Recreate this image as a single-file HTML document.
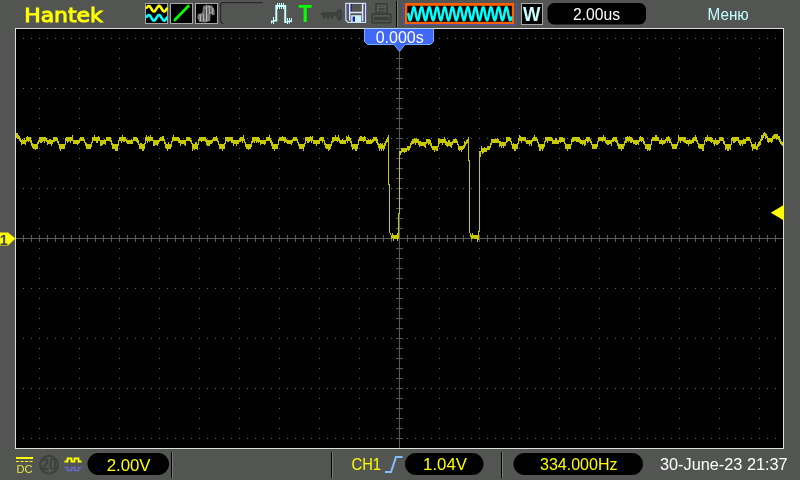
<!DOCTYPE html>
<html lang="ru"><head><meta charset="utf-8"><title>Hantek</title>
<style>html,body{margin:0;padding:0;background:#525552;overflow:hidden}body{width:800px;height:480px;position:relative;font-family:"Liberation Sans",sans-serif}svg{display:block;position:absolute;left:0;top:0;will-change:transform}text{font-family:"Liberation Sans",sans-serif}</style>
</head><body>
<svg width="800" height="480" viewBox="0 0 800 480">
<rect x="0" y="0" width="800" height="480" fill="#525552"/>
<rect x="15" y="28" width="769" height="421" fill="#dedede"/>
<rect x="16" y="29" width="767" height="419" fill="#000"/>
<path shape-rendering="crispEdges" fill="#686868" d="M23 38h1v1h-1zM31 38h1v1h-1zM39 38h1v1h-1zM47 38h1v1h-1zM55 38h1v1h-1zM63 38h1v1h-1zM71 38h1v1h-1zM79 38h1v1h-1zM87 38h1v1h-1zM95 38h1v1h-1zM103 38h1v1h-1zM111 38h1v1h-1zM119 38h1v1h-1zM127 38h1v1h-1zM135 38h1v1h-1zM143 38h1v1h-1zM151 38h1v1h-1zM159 38h1v1h-1zM167 38h1v1h-1zM175 38h1v1h-1zM183 38h1v1h-1zM191 38h1v1h-1zM199 38h1v1h-1zM207 38h1v1h-1zM215 38h1v1h-1zM223 38h1v1h-1zM231 38h1v1h-1zM239 38h1v1h-1zM247 38h1v1h-1zM255 38h1v1h-1zM263 38h1v1h-1zM271 38h1v1h-1zM279 38h1v1h-1zM287 38h1v1h-1zM295 38h1v1h-1zM303 38h1v1h-1zM311 38h1v1h-1zM319 38h1v1h-1zM327 38h1v1h-1zM335 38h1v1h-1zM343 38h1v1h-1zM351 38h1v1h-1zM359 38h1v1h-1zM367 38h1v1h-1zM375 38h1v1h-1zM383 38h1v1h-1zM391 38h1v1h-1zM399 38h1v1h-1zM407 38h1v1h-1zM415 38h1v1h-1zM423 38h1v1h-1zM431 38h1v1h-1zM439 38h1v1h-1zM447 38h1v1h-1zM455 38h1v1h-1zM463 38h1v1h-1zM471 38h1v1h-1zM479 38h1v1h-1zM487 38h1v1h-1zM495 38h1v1h-1zM503 38h1v1h-1zM511 38h1v1h-1zM519 38h1v1h-1zM527 38h1v1h-1zM535 38h1v1h-1zM543 38h1v1h-1zM551 38h1v1h-1zM559 38h1v1h-1zM567 38h1v1h-1zM575 38h1v1h-1zM583 38h1v1h-1zM591 38h1v1h-1zM599 38h1v1h-1zM607 38h1v1h-1zM615 38h1v1h-1zM623 38h1v1h-1zM631 38h1v1h-1zM639 38h1v1h-1zM647 38h1v1h-1zM655 38h1v1h-1zM663 38h1v1h-1zM671 38h1v1h-1zM679 38h1v1h-1zM687 38h1v1h-1zM695 38h1v1h-1zM703 38h1v1h-1zM711 38h1v1h-1zM719 38h1v1h-1zM727 38h1v1h-1zM735 38h1v1h-1zM743 38h1v1h-1zM751 38h1v1h-1zM759 38h1v1h-1zM767 38h1v1h-1zM775 38h1v1h-1zM23 88h1v1h-1zM31 88h1v1h-1zM39 88h1v1h-1zM47 88h1v1h-1zM55 88h1v1h-1zM63 88h1v1h-1zM71 88h1v1h-1zM79 88h1v1h-1zM87 88h1v1h-1zM95 88h1v1h-1zM103 88h1v1h-1zM111 88h1v1h-1zM119 88h1v1h-1zM127 88h1v1h-1zM135 88h1v1h-1zM143 88h1v1h-1zM151 88h1v1h-1zM159 88h1v1h-1zM167 88h1v1h-1zM175 88h1v1h-1zM183 88h1v1h-1zM191 88h1v1h-1zM199 88h1v1h-1zM207 88h1v1h-1zM215 88h1v1h-1zM223 88h1v1h-1zM231 88h1v1h-1zM239 88h1v1h-1zM247 88h1v1h-1zM255 88h1v1h-1zM263 88h1v1h-1zM271 88h1v1h-1zM279 88h1v1h-1zM287 88h1v1h-1zM295 88h1v1h-1zM303 88h1v1h-1zM311 88h1v1h-1zM319 88h1v1h-1zM327 88h1v1h-1zM335 88h1v1h-1zM343 88h1v1h-1zM351 88h1v1h-1zM359 88h1v1h-1zM367 88h1v1h-1zM375 88h1v1h-1zM383 88h1v1h-1zM391 88h1v1h-1zM399 88h1v1h-1zM407 88h1v1h-1zM415 88h1v1h-1zM423 88h1v1h-1zM431 88h1v1h-1zM439 88h1v1h-1zM447 88h1v1h-1zM455 88h1v1h-1zM463 88h1v1h-1zM471 88h1v1h-1zM479 88h1v1h-1zM487 88h1v1h-1zM495 88h1v1h-1zM503 88h1v1h-1zM511 88h1v1h-1zM519 88h1v1h-1zM527 88h1v1h-1zM535 88h1v1h-1zM543 88h1v1h-1zM551 88h1v1h-1zM559 88h1v1h-1zM567 88h1v1h-1zM575 88h1v1h-1zM583 88h1v1h-1zM591 88h1v1h-1zM599 88h1v1h-1zM607 88h1v1h-1zM615 88h1v1h-1zM623 88h1v1h-1zM631 88h1v1h-1zM639 88h1v1h-1zM647 88h1v1h-1zM655 88h1v1h-1zM663 88h1v1h-1zM671 88h1v1h-1zM679 88h1v1h-1zM687 88h1v1h-1zM695 88h1v1h-1zM703 88h1v1h-1zM711 88h1v1h-1zM719 88h1v1h-1zM727 88h1v1h-1zM735 88h1v1h-1zM743 88h1v1h-1zM751 88h1v1h-1zM759 88h1v1h-1zM767 88h1v1h-1zM775 88h1v1h-1zM23 138h1v1h-1zM31 138h1v1h-1zM39 138h1v1h-1zM47 138h1v1h-1zM55 138h1v1h-1zM63 138h1v1h-1zM71 138h1v1h-1zM79 138h1v1h-1zM87 138h1v1h-1zM95 138h1v1h-1zM103 138h1v1h-1zM111 138h1v1h-1zM119 138h1v1h-1zM127 138h1v1h-1zM135 138h1v1h-1zM143 138h1v1h-1zM151 138h1v1h-1zM159 138h1v1h-1zM167 138h1v1h-1zM175 138h1v1h-1zM183 138h1v1h-1zM191 138h1v1h-1zM199 138h1v1h-1zM207 138h1v1h-1zM215 138h1v1h-1zM223 138h1v1h-1zM231 138h1v1h-1zM239 138h1v1h-1zM247 138h1v1h-1zM255 138h1v1h-1zM263 138h1v1h-1zM271 138h1v1h-1zM279 138h1v1h-1zM287 138h1v1h-1zM295 138h1v1h-1zM303 138h1v1h-1zM311 138h1v1h-1zM319 138h1v1h-1zM327 138h1v1h-1zM335 138h1v1h-1zM343 138h1v1h-1zM351 138h1v1h-1zM359 138h1v1h-1zM367 138h1v1h-1zM375 138h1v1h-1zM383 138h1v1h-1zM391 138h1v1h-1zM399 138h1v1h-1zM407 138h1v1h-1zM415 138h1v1h-1zM423 138h1v1h-1zM431 138h1v1h-1zM439 138h1v1h-1zM447 138h1v1h-1zM455 138h1v1h-1zM463 138h1v1h-1zM471 138h1v1h-1zM479 138h1v1h-1zM487 138h1v1h-1zM495 138h1v1h-1zM503 138h1v1h-1zM511 138h1v1h-1zM519 138h1v1h-1zM527 138h1v1h-1zM535 138h1v1h-1zM543 138h1v1h-1zM551 138h1v1h-1zM559 138h1v1h-1zM567 138h1v1h-1zM575 138h1v1h-1zM583 138h1v1h-1zM591 138h1v1h-1zM599 138h1v1h-1zM607 138h1v1h-1zM615 138h1v1h-1zM623 138h1v1h-1zM631 138h1v1h-1zM639 138h1v1h-1zM647 138h1v1h-1zM655 138h1v1h-1zM663 138h1v1h-1zM671 138h1v1h-1zM679 138h1v1h-1zM687 138h1v1h-1zM695 138h1v1h-1zM703 138h1v1h-1zM711 138h1v1h-1zM719 138h1v1h-1zM727 138h1v1h-1zM735 138h1v1h-1zM743 138h1v1h-1zM751 138h1v1h-1zM759 138h1v1h-1zM767 138h1v1h-1zM775 138h1v1h-1zM23 188h1v1h-1zM31 188h1v1h-1zM39 188h1v1h-1zM47 188h1v1h-1zM55 188h1v1h-1zM63 188h1v1h-1zM71 188h1v1h-1zM79 188h1v1h-1zM87 188h1v1h-1zM95 188h1v1h-1zM103 188h1v1h-1zM111 188h1v1h-1zM119 188h1v1h-1zM127 188h1v1h-1zM135 188h1v1h-1zM143 188h1v1h-1zM151 188h1v1h-1zM159 188h1v1h-1zM167 188h1v1h-1zM175 188h1v1h-1zM183 188h1v1h-1zM191 188h1v1h-1zM199 188h1v1h-1zM207 188h1v1h-1zM215 188h1v1h-1zM223 188h1v1h-1zM231 188h1v1h-1zM239 188h1v1h-1zM247 188h1v1h-1zM255 188h1v1h-1zM263 188h1v1h-1zM271 188h1v1h-1zM279 188h1v1h-1zM287 188h1v1h-1zM295 188h1v1h-1zM303 188h1v1h-1zM311 188h1v1h-1zM319 188h1v1h-1zM327 188h1v1h-1zM335 188h1v1h-1zM343 188h1v1h-1zM351 188h1v1h-1zM359 188h1v1h-1zM367 188h1v1h-1zM375 188h1v1h-1zM383 188h1v1h-1zM391 188h1v1h-1zM399 188h1v1h-1zM407 188h1v1h-1zM415 188h1v1h-1zM423 188h1v1h-1zM431 188h1v1h-1zM439 188h1v1h-1zM447 188h1v1h-1zM455 188h1v1h-1zM463 188h1v1h-1zM471 188h1v1h-1zM479 188h1v1h-1zM487 188h1v1h-1zM495 188h1v1h-1zM503 188h1v1h-1zM511 188h1v1h-1zM519 188h1v1h-1zM527 188h1v1h-1zM535 188h1v1h-1zM543 188h1v1h-1zM551 188h1v1h-1zM559 188h1v1h-1zM567 188h1v1h-1zM575 188h1v1h-1zM583 188h1v1h-1zM591 188h1v1h-1zM599 188h1v1h-1zM607 188h1v1h-1zM615 188h1v1h-1zM623 188h1v1h-1zM631 188h1v1h-1zM639 188h1v1h-1zM647 188h1v1h-1zM655 188h1v1h-1zM663 188h1v1h-1zM671 188h1v1h-1zM679 188h1v1h-1zM687 188h1v1h-1zM695 188h1v1h-1zM703 188h1v1h-1zM711 188h1v1h-1zM719 188h1v1h-1zM727 188h1v1h-1zM735 188h1v1h-1zM743 188h1v1h-1zM751 188h1v1h-1zM759 188h1v1h-1zM767 188h1v1h-1zM775 188h1v1h-1zM23 288h1v1h-1zM31 288h1v1h-1zM39 288h1v1h-1zM47 288h1v1h-1zM55 288h1v1h-1zM63 288h1v1h-1zM71 288h1v1h-1zM79 288h1v1h-1zM87 288h1v1h-1zM95 288h1v1h-1zM103 288h1v1h-1zM111 288h1v1h-1zM119 288h1v1h-1zM127 288h1v1h-1zM135 288h1v1h-1zM143 288h1v1h-1zM151 288h1v1h-1zM159 288h1v1h-1zM167 288h1v1h-1zM175 288h1v1h-1zM183 288h1v1h-1zM191 288h1v1h-1zM199 288h1v1h-1zM207 288h1v1h-1zM215 288h1v1h-1zM223 288h1v1h-1zM231 288h1v1h-1zM239 288h1v1h-1zM247 288h1v1h-1zM255 288h1v1h-1zM263 288h1v1h-1zM271 288h1v1h-1zM279 288h1v1h-1zM287 288h1v1h-1zM295 288h1v1h-1zM303 288h1v1h-1zM311 288h1v1h-1zM319 288h1v1h-1zM327 288h1v1h-1zM335 288h1v1h-1zM343 288h1v1h-1zM351 288h1v1h-1zM359 288h1v1h-1zM367 288h1v1h-1zM375 288h1v1h-1zM383 288h1v1h-1zM391 288h1v1h-1zM399 288h1v1h-1zM407 288h1v1h-1zM415 288h1v1h-1zM423 288h1v1h-1zM431 288h1v1h-1zM439 288h1v1h-1zM447 288h1v1h-1zM455 288h1v1h-1zM463 288h1v1h-1zM471 288h1v1h-1zM479 288h1v1h-1zM487 288h1v1h-1zM495 288h1v1h-1zM503 288h1v1h-1zM511 288h1v1h-1zM519 288h1v1h-1zM527 288h1v1h-1zM535 288h1v1h-1zM543 288h1v1h-1zM551 288h1v1h-1zM559 288h1v1h-1zM567 288h1v1h-1zM575 288h1v1h-1zM583 288h1v1h-1zM591 288h1v1h-1zM599 288h1v1h-1zM607 288h1v1h-1zM615 288h1v1h-1zM623 288h1v1h-1zM631 288h1v1h-1zM639 288h1v1h-1zM647 288h1v1h-1zM655 288h1v1h-1zM663 288h1v1h-1zM671 288h1v1h-1zM679 288h1v1h-1zM687 288h1v1h-1zM695 288h1v1h-1zM703 288h1v1h-1zM711 288h1v1h-1zM719 288h1v1h-1zM727 288h1v1h-1zM735 288h1v1h-1zM743 288h1v1h-1zM751 288h1v1h-1zM759 288h1v1h-1zM767 288h1v1h-1zM775 288h1v1h-1zM23 338h1v1h-1zM31 338h1v1h-1zM39 338h1v1h-1zM47 338h1v1h-1zM55 338h1v1h-1zM63 338h1v1h-1zM71 338h1v1h-1zM79 338h1v1h-1zM87 338h1v1h-1zM95 338h1v1h-1zM103 338h1v1h-1zM111 338h1v1h-1zM119 338h1v1h-1zM127 338h1v1h-1zM135 338h1v1h-1zM143 338h1v1h-1zM151 338h1v1h-1zM159 338h1v1h-1zM167 338h1v1h-1zM175 338h1v1h-1zM183 338h1v1h-1zM191 338h1v1h-1zM199 338h1v1h-1zM207 338h1v1h-1zM215 338h1v1h-1zM223 338h1v1h-1zM231 338h1v1h-1zM239 338h1v1h-1zM247 338h1v1h-1zM255 338h1v1h-1zM263 338h1v1h-1zM271 338h1v1h-1zM279 338h1v1h-1zM287 338h1v1h-1zM295 338h1v1h-1zM303 338h1v1h-1zM311 338h1v1h-1zM319 338h1v1h-1zM327 338h1v1h-1zM335 338h1v1h-1zM343 338h1v1h-1zM351 338h1v1h-1zM359 338h1v1h-1zM367 338h1v1h-1zM375 338h1v1h-1zM383 338h1v1h-1zM391 338h1v1h-1zM399 338h1v1h-1zM407 338h1v1h-1zM415 338h1v1h-1zM423 338h1v1h-1zM431 338h1v1h-1zM439 338h1v1h-1zM447 338h1v1h-1zM455 338h1v1h-1zM463 338h1v1h-1zM471 338h1v1h-1zM479 338h1v1h-1zM487 338h1v1h-1zM495 338h1v1h-1zM503 338h1v1h-1zM511 338h1v1h-1zM519 338h1v1h-1zM527 338h1v1h-1zM535 338h1v1h-1zM543 338h1v1h-1zM551 338h1v1h-1zM559 338h1v1h-1zM567 338h1v1h-1zM575 338h1v1h-1zM583 338h1v1h-1zM591 338h1v1h-1zM599 338h1v1h-1zM607 338h1v1h-1zM615 338h1v1h-1zM623 338h1v1h-1zM631 338h1v1h-1zM639 338h1v1h-1zM647 338h1v1h-1zM655 338h1v1h-1zM663 338h1v1h-1zM671 338h1v1h-1zM679 338h1v1h-1zM687 338h1v1h-1zM695 338h1v1h-1zM703 338h1v1h-1zM711 338h1v1h-1zM719 338h1v1h-1zM727 338h1v1h-1zM735 338h1v1h-1zM743 338h1v1h-1zM751 338h1v1h-1zM759 338h1v1h-1zM767 338h1v1h-1zM775 338h1v1h-1zM23 388h1v1h-1zM31 388h1v1h-1zM39 388h1v1h-1zM47 388h1v1h-1zM55 388h1v1h-1zM63 388h1v1h-1zM71 388h1v1h-1zM79 388h1v1h-1zM87 388h1v1h-1zM95 388h1v1h-1zM103 388h1v1h-1zM111 388h1v1h-1zM119 388h1v1h-1zM127 388h1v1h-1zM135 388h1v1h-1zM143 388h1v1h-1zM151 388h1v1h-1zM159 388h1v1h-1zM167 388h1v1h-1zM175 388h1v1h-1zM183 388h1v1h-1zM191 388h1v1h-1zM199 388h1v1h-1zM207 388h1v1h-1zM215 388h1v1h-1zM223 388h1v1h-1zM231 388h1v1h-1zM239 388h1v1h-1zM247 388h1v1h-1zM255 388h1v1h-1zM263 388h1v1h-1zM271 388h1v1h-1zM279 388h1v1h-1zM287 388h1v1h-1zM295 388h1v1h-1zM303 388h1v1h-1zM311 388h1v1h-1zM319 388h1v1h-1zM327 388h1v1h-1zM335 388h1v1h-1zM343 388h1v1h-1zM351 388h1v1h-1zM359 388h1v1h-1zM367 388h1v1h-1zM375 388h1v1h-1zM383 388h1v1h-1zM391 388h1v1h-1zM399 388h1v1h-1zM407 388h1v1h-1zM415 388h1v1h-1zM423 388h1v1h-1zM431 388h1v1h-1zM439 388h1v1h-1zM447 388h1v1h-1zM455 388h1v1h-1zM463 388h1v1h-1zM471 388h1v1h-1zM479 388h1v1h-1zM487 388h1v1h-1zM495 388h1v1h-1zM503 388h1v1h-1zM511 388h1v1h-1zM519 388h1v1h-1zM527 388h1v1h-1zM535 388h1v1h-1zM543 388h1v1h-1zM551 388h1v1h-1zM559 388h1v1h-1zM567 388h1v1h-1zM575 388h1v1h-1zM583 388h1v1h-1zM591 388h1v1h-1zM599 388h1v1h-1zM607 388h1v1h-1zM615 388h1v1h-1zM623 388h1v1h-1zM631 388h1v1h-1zM639 388h1v1h-1zM647 388h1v1h-1zM655 388h1v1h-1zM663 388h1v1h-1zM671 388h1v1h-1zM679 388h1v1h-1zM687 388h1v1h-1zM695 388h1v1h-1zM703 388h1v1h-1zM711 388h1v1h-1zM719 388h1v1h-1zM727 388h1v1h-1zM735 388h1v1h-1zM743 388h1v1h-1zM751 388h1v1h-1zM759 388h1v1h-1zM767 388h1v1h-1zM775 388h1v1h-1zM23 438h1v1h-1zM31 438h1v1h-1zM39 438h1v1h-1zM47 438h1v1h-1zM55 438h1v1h-1zM63 438h1v1h-1zM71 438h1v1h-1zM79 438h1v1h-1zM87 438h1v1h-1zM95 438h1v1h-1zM103 438h1v1h-1zM111 438h1v1h-1zM119 438h1v1h-1zM127 438h1v1h-1zM135 438h1v1h-1zM143 438h1v1h-1zM151 438h1v1h-1zM159 438h1v1h-1zM167 438h1v1h-1zM175 438h1v1h-1zM183 438h1v1h-1zM191 438h1v1h-1zM199 438h1v1h-1zM207 438h1v1h-1zM215 438h1v1h-1zM223 438h1v1h-1zM231 438h1v1h-1zM239 438h1v1h-1zM247 438h1v1h-1zM255 438h1v1h-1zM263 438h1v1h-1zM271 438h1v1h-1zM279 438h1v1h-1zM287 438h1v1h-1zM295 438h1v1h-1zM303 438h1v1h-1zM311 438h1v1h-1zM319 438h1v1h-1zM327 438h1v1h-1zM335 438h1v1h-1zM343 438h1v1h-1zM351 438h1v1h-1zM359 438h1v1h-1zM367 438h1v1h-1zM375 438h1v1h-1zM383 438h1v1h-1zM391 438h1v1h-1zM399 438h1v1h-1zM407 438h1v1h-1zM415 438h1v1h-1zM423 438h1v1h-1zM431 438h1v1h-1zM439 438h1v1h-1zM447 438h1v1h-1zM455 438h1v1h-1zM463 438h1v1h-1zM471 438h1v1h-1zM479 438h1v1h-1zM487 438h1v1h-1zM495 438h1v1h-1zM503 438h1v1h-1zM511 438h1v1h-1zM519 438h1v1h-1zM527 438h1v1h-1zM535 438h1v1h-1zM543 438h1v1h-1zM551 438h1v1h-1zM559 438h1v1h-1zM567 438h1v1h-1zM575 438h1v1h-1zM583 438h1v1h-1zM591 438h1v1h-1zM599 438h1v1h-1zM607 438h1v1h-1zM615 438h1v1h-1zM623 438h1v1h-1zM631 438h1v1h-1zM639 438h1v1h-1zM647 438h1v1h-1zM655 438h1v1h-1zM663 438h1v1h-1zM671 438h1v1h-1zM679 438h1v1h-1zM687 438h1v1h-1zM695 438h1v1h-1zM703 438h1v1h-1zM711 438h1v1h-1zM719 438h1v1h-1zM727 438h1v1h-1zM735 438h1v1h-1zM743 438h1v1h-1zM751 438h1v1h-1zM759 438h1v1h-1zM767 438h1v1h-1zM775 438h1v1h-1zM39 48h1v1h-1zM39 58h1v1h-1zM39 68h1v1h-1zM39 78h1v1h-1zM39 98h1v1h-1zM39 108h1v1h-1zM39 118h1v1h-1zM39 128h1v1h-1zM39 148h1v1h-1zM39 158h1v1h-1zM39 168h1v1h-1zM39 178h1v1h-1zM39 198h1v1h-1zM39 208h1v1h-1zM39 218h1v1h-1zM39 228h1v1h-1zM39 248h1v1h-1zM39 258h1v1h-1zM39 268h1v1h-1zM39 278h1v1h-1zM39 298h1v1h-1zM39 308h1v1h-1zM39 318h1v1h-1zM39 328h1v1h-1zM39 348h1v1h-1zM39 358h1v1h-1zM39 368h1v1h-1zM39 378h1v1h-1zM39 398h1v1h-1zM39 408h1v1h-1zM39 418h1v1h-1zM39 428h1v1h-1zM79 48h1v1h-1zM79 58h1v1h-1zM79 68h1v1h-1zM79 78h1v1h-1zM79 98h1v1h-1zM79 108h1v1h-1zM79 118h1v1h-1zM79 128h1v1h-1zM79 148h1v1h-1zM79 158h1v1h-1zM79 168h1v1h-1zM79 178h1v1h-1zM79 198h1v1h-1zM79 208h1v1h-1zM79 218h1v1h-1zM79 228h1v1h-1zM79 248h1v1h-1zM79 258h1v1h-1zM79 268h1v1h-1zM79 278h1v1h-1zM79 298h1v1h-1zM79 308h1v1h-1zM79 318h1v1h-1zM79 328h1v1h-1zM79 348h1v1h-1zM79 358h1v1h-1zM79 368h1v1h-1zM79 378h1v1h-1zM79 398h1v1h-1zM79 408h1v1h-1zM79 418h1v1h-1zM79 428h1v1h-1zM119 48h1v1h-1zM119 58h1v1h-1zM119 68h1v1h-1zM119 78h1v1h-1zM119 98h1v1h-1zM119 108h1v1h-1zM119 118h1v1h-1zM119 128h1v1h-1zM119 148h1v1h-1zM119 158h1v1h-1zM119 168h1v1h-1zM119 178h1v1h-1zM119 198h1v1h-1zM119 208h1v1h-1zM119 218h1v1h-1zM119 228h1v1h-1zM119 248h1v1h-1zM119 258h1v1h-1zM119 268h1v1h-1zM119 278h1v1h-1zM119 298h1v1h-1zM119 308h1v1h-1zM119 318h1v1h-1zM119 328h1v1h-1zM119 348h1v1h-1zM119 358h1v1h-1zM119 368h1v1h-1zM119 378h1v1h-1zM119 398h1v1h-1zM119 408h1v1h-1zM119 418h1v1h-1zM119 428h1v1h-1zM159 48h1v1h-1zM159 58h1v1h-1zM159 68h1v1h-1zM159 78h1v1h-1zM159 98h1v1h-1zM159 108h1v1h-1zM159 118h1v1h-1zM159 128h1v1h-1zM159 148h1v1h-1zM159 158h1v1h-1zM159 168h1v1h-1zM159 178h1v1h-1zM159 198h1v1h-1zM159 208h1v1h-1zM159 218h1v1h-1zM159 228h1v1h-1zM159 248h1v1h-1zM159 258h1v1h-1zM159 268h1v1h-1zM159 278h1v1h-1zM159 298h1v1h-1zM159 308h1v1h-1zM159 318h1v1h-1zM159 328h1v1h-1zM159 348h1v1h-1zM159 358h1v1h-1zM159 368h1v1h-1zM159 378h1v1h-1zM159 398h1v1h-1zM159 408h1v1h-1zM159 418h1v1h-1zM159 428h1v1h-1zM199 48h1v1h-1zM199 58h1v1h-1zM199 68h1v1h-1zM199 78h1v1h-1zM199 98h1v1h-1zM199 108h1v1h-1zM199 118h1v1h-1zM199 128h1v1h-1zM199 148h1v1h-1zM199 158h1v1h-1zM199 168h1v1h-1zM199 178h1v1h-1zM199 198h1v1h-1zM199 208h1v1h-1zM199 218h1v1h-1zM199 228h1v1h-1zM199 248h1v1h-1zM199 258h1v1h-1zM199 268h1v1h-1zM199 278h1v1h-1zM199 298h1v1h-1zM199 308h1v1h-1zM199 318h1v1h-1zM199 328h1v1h-1zM199 348h1v1h-1zM199 358h1v1h-1zM199 368h1v1h-1zM199 378h1v1h-1zM199 398h1v1h-1zM199 408h1v1h-1zM199 418h1v1h-1zM199 428h1v1h-1zM239 48h1v1h-1zM239 58h1v1h-1zM239 68h1v1h-1zM239 78h1v1h-1zM239 98h1v1h-1zM239 108h1v1h-1zM239 118h1v1h-1zM239 128h1v1h-1zM239 148h1v1h-1zM239 158h1v1h-1zM239 168h1v1h-1zM239 178h1v1h-1zM239 198h1v1h-1zM239 208h1v1h-1zM239 218h1v1h-1zM239 228h1v1h-1zM239 248h1v1h-1zM239 258h1v1h-1zM239 268h1v1h-1zM239 278h1v1h-1zM239 298h1v1h-1zM239 308h1v1h-1zM239 318h1v1h-1zM239 328h1v1h-1zM239 348h1v1h-1zM239 358h1v1h-1zM239 368h1v1h-1zM239 378h1v1h-1zM239 398h1v1h-1zM239 408h1v1h-1zM239 418h1v1h-1zM239 428h1v1h-1zM279 48h1v1h-1zM279 58h1v1h-1zM279 68h1v1h-1zM279 78h1v1h-1zM279 98h1v1h-1zM279 108h1v1h-1zM279 118h1v1h-1zM279 128h1v1h-1zM279 148h1v1h-1zM279 158h1v1h-1zM279 168h1v1h-1zM279 178h1v1h-1zM279 198h1v1h-1zM279 208h1v1h-1zM279 218h1v1h-1zM279 228h1v1h-1zM279 248h1v1h-1zM279 258h1v1h-1zM279 268h1v1h-1zM279 278h1v1h-1zM279 298h1v1h-1zM279 308h1v1h-1zM279 318h1v1h-1zM279 328h1v1h-1zM279 348h1v1h-1zM279 358h1v1h-1zM279 368h1v1h-1zM279 378h1v1h-1zM279 398h1v1h-1zM279 408h1v1h-1zM279 418h1v1h-1zM279 428h1v1h-1zM319 48h1v1h-1zM319 58h1v1h-1zM319 68h1v1h-1zM319 78h1v1h-1zM319 98h1v1h-1zM319 108h1v1h-1zM319 118h1v1h-1zM319 128h1v1h-1zM319 148h1v1h-1zM319 158h1v1h-1zM319 168h1v1h-1zM319 178h1v1h-1zM319 198h1v1h-1zM319 208h1v1h-1zM319 218h1v1h-1zM319 228h1v1h-1zM319 248h1v1h-1zM319 258h1v1h-1zM319 268h1v1h-1zM319 278h1v1h-1zM319 298h1v1h-1zM319 308h1v1h-1zM319 318h1v1h-1zM319 328h1v1h-1zM319 348h1v1h-1zM319 358h1v1h-1zM319 368h1v1h-1zM319 378h1v1h-1zM319 398h1v1h-1zM319 408h1v1h-1zM319 418h1v1h-1zM319 428h1v1h-1zM359 48h1v1h-1zM359 58h1v1h-1zM359 68h1v1h-1zM359 78h1v1h-1zM359 98h1v1h-1zM359 108h1v1h-1zM359 118h1v1h-1zM359 128h1v1h-1zM359 148h1v1h-1zM359 158h1v1h-1zM359 168h1v1h-1zM359 178h1v1h-1zM359 198h1v1h-1zM359 208h1v1h-1zM359 218h1v1h-1zM359 228h1v1h-1zM359 248h1v1h-1zM359 258h1v1h-1zM359 268h1v1h-1zM359 278h1v1h-1zM359 298h1v1h-1zM359 308h1v1h-1zM359 318h1v1h-1zM359 328h1v1h-1zM359 348h1v1h-1zM359 358h1v1h-1zM359 368h1v1h-1zM359 378h1v1h-1zM359 398h1v1h-1zM359 408h1v1h-1zM359 418h1v1h-1zM359 428h1v1h-1zM439 48h1v1h-1zM439 58h1v1h-1zM439 68h1v1h-1zM439 78h1v1h-1zM439 98h1v1h-1zM439 108h1v1h-1zM439 118h1v1h-1zM439 128h1v1h-1zM439 148h1v1h-1zM439 158h1v1h-1zM439 168h1v1h-1zM439 178h1v1h-1zM439 198h1v1h-1zM439 208h1v1h-1zM439 218h1v1h-1zM439 228h1v1h-1zM439 248h1v1h-1zM439 258h1v1h-1zM439 268h1v1h-1zM439 278h1v1h-1zM439 298h1v1h-1zM439 308h1v1h-1zM439 318h1v1h-1zM439 328h1v1h-1zM439 348h1v1h-1zM439 358h1v1h-1zM439 368h1v1h-1zM439 378h1v1h-1zM439 398h1v1h-1zM439 408h1v1h-1zM439 418h1v1h-1zM439 428h1v1h-1zM479 48h1v1h-1zM479 58h1v1h-1zM479 68h1v1h-1zM479 78h1v1h-1zM479 98h1v1h-1zM479 108h1v1h-1zM479 118h1v1h-1zM479 128h1v1h-1zM479 148h1v1h-1zM479 158h1v1h-1zM479 168h1v1h-1zM479 178h1v1h-1zM479 198h1v1h-1zM479 208h1v1h-1zM479 218h1v1h-1zM479 228h1v1h-1zM479 248h1v1h-1zM479 258h1v1h-1zM479 268h1v1h-1zM479 278h1v1h-1zM479 298h1v1h-1zM479 308h1v1h-1zM479 318h1v1h-1zM479 328h1v1h-1zM479 348h1v1h-1zM479 358h1v1h-1zM479 368h1v1h-1zM479 378h1v1h-1zM479 398h1v1h-1zM479 408h1v1h-1zM479 418h1v1h-1zM479 428h1v1h-1zM519 48h1v1h-1zM519 58h1v1h-1zM519 68h1v1h-1zM519 78h1v1h-1zM519 98h1v1h-1zM519 108h1v1h-1zM519 118h1v1h-1zM519 128h1v1h-1zM519 148h1v1h-1zM519 158h1v1h-1zM519 168h1v1h-1zM519 178h1v1h-1zM519 198h1v1h-1zM519 208h1v1h-1zM519 218h1v1h-1zM519 228h1v1h-1zM519 248h1v1h-1zM519 258h1v1h-1zM519 268h1v1h-1zM519 278h1v1h-1zM519 298h1v1h-1zM519 308h1v1h-1zM519 318h1v1h-1zM519 328h1v1h-1zM519 348h1v1h-1zM519 358h1v1h-1zM519 368h1v1h-1zM519 378h1v1h-1zM519 398h1v1h-1zM519 408h1v1h-1zM519 418h1v1h-1zM519 428h1v1h-1zM559 48h1v1h-1zM559 58h1v1h-1zM559 68h1v1h-1zM559 78h1v1h-1zM559 98h1v1h-1zM559 108h1v1h-1zM559 118h1v1h-1zM559 128h1v1h-1zM559 148h1v1h-1zM559 158h1v1h-1zM559 168h1v1h-1zM559 178h1v1h-1zM559 198h1v1h-1zM559 208h1v1h-1zM559 218h1v1h-1zM559 228h1v1h-1zM559 248h1v1h-1zM559 258h1v1h-1zM559 268h1v1h-1zM559 278h1v1h-1zM559 298h1v1h-1zM559 308h1v1h-1zM559 318h1v1h-1zM559 328h1v1h-1zM559 348h1v1h-1zM559 358h1v1h-1zM559 368h1v1h-1zM559 378h1v1h-1zM559 398h1v1h-1zM559 408h1v1h-1zM559 418h1v1h-1zM559 428h1v1h-1zM599 48h1v1h-1zM599 58h1v1h-1zM599 68h1v1h-1zM599 78h1v1h-1zM599 98h1v1h-1zM599 108h1v1h-1zM599 118h1v1h-1zM599 128h1v1h-1zM599 148h1v1h-1zM599 158h1v1h-1zM599 168h1v1h-1zM599 178h1v1h-1zM599 198h1v1h-1zM599 208h1v1h-1zM599 218h1v1h-1zM599 228h1v1h-1zM599 248h1v1h-1zM599 258h1v1h-1zM599 268h1v1h-1zM599 278h1v1h-1zM599 298h1v1h-1zM599 308h1v1h-1zM599 318h1v1h-1zM599 328h1v1h-1zM599 348h1v1h-1zM599 358h1v1h-1zM599 368h1v1h-1zM599 378h1v1h-1zM599 398h1v1h-1zM599 408h1v1h-1zM599 418h1v1h-1zM599 428h1v1h-1zM639 48h1v1h-1zM639 58h1v1h-1zM639 68h1v1h-1zM639 78h1v1h-1zM639 98h1v1h-1zM639 108h1v1h-1zM639 118h1v1h-1zM639 128h1v1h-1zM639 148h1v1h-1zM639 158h1v1h-1zM639 168h1v1h-1zM639 178h1v1h-1zM639 198h1v1h-1zM639 208h1v1h-1zM639 218h1v1h-1zM639 228h1v1h-1zM639 248h1v1h-1zM639 258h1v1h-1zM639 268h1v1h-1zM639 278h1v1h-1zM639 298h1v1h-1zM639 308h1v1h-1zM639 318h1v1h-1zM639 328h1v1h-1zM639 348h1v1h-1zM639 358h1v1h-1zM639 368h1v1h-1zM639 378h1v1h-1zM639 398h1v1h-1zM639 408h1v1h-1zM639 418h1v1h-1zM639 428h1v1h-1zM679 48h1v1h-1zM679 58h1v1h-1zM679 68h1v1h-1zM679 78h1v1h-1zM679 98h1v1h-1zM679 108h1v1h-1zM679 118h1v1h-1zM679 128h1v1h-1zM679 148h1v1h-1zM679 158h1v1h-1zM679 168h1v1h-1zM679 178h1v1h-1zM679 198h1v1h-1zM679 208h1v1h-1zM679 218h1v1h-1zM679 228h1v1h-1zM679 248h1v1h-1zM679 258h1v1h-1zM679 268h1v1h-1zM679 278h1v1h-1zM679 298h1v1h-1zM679 308h1v1h-1zM679 318h1v1h-1zM679 328h1v1h-1zM679 348h1v1h-1zM679 358h1v1h-1zM679 368h1v1h-1zM679 378h1v1h-1zM679 398h1v1h-1zM679 408h1v1h-1zM679 418h1v1h-1zM679 428h1v1h-1zM719 48h1v1h-1zM719 58h1v1h-1zM719 68h1v1h-1zM719 78h1v1h-1zM719 98h1v1h-1zM719 108h1v1h-1zM719 118h1v1h-1zM719 128h1v1h-1zM719 148h1v1h-1zM719 158h1v1h-1zM719 168h1v1h-1zM719 178h1v1h-1zM719 198h1v1h-1zM719 208h1v1h-1zM719 218h1v1h-1zM719 228h1v1h-1zM719 248h1v1h-1zM719 258h1v1h-1zM719 268h1v1h-1zM719 278h1v1h-1zM719 298h1v1h-1zM719 308h1v1h-1zM719 318h1v1h-1zM719 328h1v1h-1zM719 348h1v1h-1zM719 358h1v1h-1zM719 368h1v1h-1zM719 378h1v1h-1zM719 398h1v1h-1zM719 408h1v1h-1zM719 418h1v1h-1zM719 428h1v1h-1zM759 48h1v1h-1zM759 58h1v1h-1zM759 68h1v1h-1zM759 78h1v1h-1zM759 98h1v1h-1zM759 108h1v1h-1zM759 118h1v1h-1zM759 128h1v1h-1zM759 148h1v1h-1zM759 158h1v1h-1zM759 168h1v1h-1zM759 178h1v1h-1zM759 198h1v1h-1zM759 208h1v1h-1zM759 218h1v1h-1zM759 228h1v1h-1zM759 248h1v1h-1zM759 258h1v1h-1zM759 268h1v1h-1zM759 278h1v1h-1zM759 298h1v1h-1zM759 308h1v1h-1zM759 318h1v1h-1zM759 328h1v1h-1zM759 348h1v1h-1zM759 358h1v1h-1zM759 368h1v1h-1zM759 378h1v1h-1zM759 398h1v1h-1zM759 408h1v1h-1zM759 418h1v1h-1zM759 428h1v1h-1z"/>
<path shape-rendering="crispEdges" fill="#585c58" d="M16 238h767v1h-767zM399 52h1v396h-1zM23 235h1v7h-1zM31 235h1v7h-1zM39 235h1v7h-1zM47 235h1v7h-1zM55 235h1v7h-1zM63 235h1v7h-1zM71 235h1v7h-1zM79 235h1v7h-1zM87 235h1v7h-1zM95 235h1v7h-1zM103 235h1v7h-1zM111 235h1v7h-1zM119 235h1v7h-1zM127 235h1v7h-1zM135 235h1v7h-1zM143 235h1v7h-1zM151 235h1v7h-1zM159 235h1v7h-1zM167 235h1v7h-1zM175 235h1v7h-1zM183 235h1v7h-1zM191 235h1v7h-1zM199 235h1v7h-1zM207 235h1v7h-1zM215 235h1v7h-1zM223 235h1v7h-1zM231 235h1v7h-1zM239 235h1v7h-1zM247 235h1v7h-1zM255 235h1v7h-1zM263 235h1v7h-1zM271 235h1v7h-1zM279 235h1v7h-1zM287 235h1v7h-1zM295 235h1v7h-1zM303 235h1v7h-1zM311 235h1v7h-1zM319 235h1v7h-1zM327 235h1v7h-1zM335 235h1v7h-1zM343 235h1v7h-1zM351 235h1v7h-1zM359 235h1v7h-1zM367 235h1v7h-1zM375 235h1v7h-1zM383 235h1v7h-1zM391 235h1v7h-1zM399 235h1v7h-1zM407 235h1v7h-1zM415 235h1v7h-1zM423 235h1v7h-1zM431 235h1v7h-1zM439 235h1v7h-1zM447 235h1v7h-1zM455 235h1v7h-1zM463 235h1v7h-1zM471 235h1v7h-1zM479 235h1v7h-1zM487 235h1v7h-1zM495 235h1v7h-1zM503 235h1v7h-1zM511 235h1v7h-1zM519 235h1v7h-1zM527 235h1v7h-1zM535 235h1v7h-1zM543 235h1v7h-1zM551 235h1v7h-1zM559 235h1v7h-1zM567 235h1v7h-1zM575 235h1v7h-1zM583 235h1v7h-1zM591 235h1v7h-1zM599 235h1v7h-1zM607 235h1v7h-1zM615 235h1v7h-1zM623 235h1v7h-1zM631 235h1v7h-1zM639 235h1v7h-1zM647 235h1v7h-1zM655 235h1v7h-1zM663 235h1v7h-1zM671 235h1v7h-1zM679 235h1v7h-1zM687 235h1v7h-1zM695 235h1v7h-1zM703 235h1v7h-1zM711 235h1v7h-1zM719 235h1v7h-1zM727 235h1v7h-1zM735 235h1v7h-1zM743 235h1v7h-1zM751 235h1v7h-1zM759 235h1v7h-1zM767 235h1v7h-1zM775 235h1v7h-1zM396 58h7v1h-7zM396 68h7v1h-7zM396 78h7v1h-7zM396 88h7v1h-7zM396 98h7v1h-7zM396 108h7v1h-7zM396 118h7v1h-7zM396 128h7v1h-7zM396 138h7v1h-7zM396 148h7v1h-7zM396 158h7v1h-7zM396 168h7v1h-7zM396 178h7v1h-7zM396 188h7v1h-7zM396 198h7v1h-7zM396 208h7v1h-7zM396 218h7v1h-7zM396 228h7v1h-7zM396 238h7v1h-7zM396 248h7v1h-7zM396 258h7v1h-7zM396 268h7v1h-7zM396 278h7v1h-7zM396 288h7v1h-7zM396 298h7v1h-7zM396 308h7v1h-7zM396 318h7v1h-7zM396 328h7v1h-7zM396 338h7v1h-7zM396 348h7v1h-7zM396 358h7v1h-7zM396 368h7v1h-7zM396 378h7v1h-7zM396 388h7v1h-7zM396 398h7v1h-7zM396 408h7v1h-7zM396 418h7v1h-7zM396 428h7v1h-7zM396 438h7v1h-7z"/>
<path shape-rendering="crispEdges" fill="#c8c800" d="M16 133h1v5h-1zM17 133h1v6h-1zM18 135h1v4h-1zM19 136h1v5h-1zM20 138h1v4h-1zM21 140h1v5h-1zM22 139h1v5h-1zM23 140h1v4h-1zM24 138h1v6h-1zM25 140h1v5h-1zM26 137h1v5h-1zM27 136h1v5h-1zM28 137h1v5h-1zM29 137h1v4h-1zM30 137h1v6h-1zM31 140h1v6h-1zM32 143h1v5h-1zM33 144h1v5h-1zM34 144h1v5h-1zM35 144h1v6h-1zM36 144h1v5h-1zM37 142h1v7h-1zM38 140h1v4h-1zM39 137h1v5h-1zM40 137h1v6h-1zM41 137h1v6h-1zM42 137h1v5h-1zM43 137h1v4h-1zM44 137h1v6h-1zM45 137h1v4h-1zM46 138h1v4h-1zM47 140h1v5h-1zM48 140h1v4h-1zM49 139h1v5h-1zM50 139h1v5h-1zM51 140h1v6h-1zM52 140h1v4h-1zM53 137h1v5h-1zM54 137h1v5h-1zM55 137h1v4h-1zM56 137h1v4h-1zM57 138h1v5h-1zM58 141h1v4h-1zM59 144h1v5h-1zM60 144h1v7h-1zM61 144h1v5h-1zM62 144h1v5h-1zM63 144h1v5h-1zM64 144h1v5h-1zM65 138h1v7h-1zM66 137h1v4h-1zM67 137h1v6h-1zM68 137h1v5h-1zM69 137h1v4h-1zM70 137h1v6h-1zM71 137h1v4h-1zM72 135h1v6h-1zM73 140h1v4h-1zM74 140h1v4h-1zM75 140h1v4h-1zM76 140h1v4h-1zM77 140h1v5h-1zM78 140h1v4h-1zM79 139h1v4h-1zM80 137h1v4h-1zM81 137h1v4h-1zM82 137h1v4h-1zM83 137h1v4h-1zM84 139h1v4h-1zM85 142h1v4h-1zM86 143h1v6h-1zM87 144h1v5h-1zM88 144h1v5h-1zM89 144h1v5h-1zM90 144h1v5h-1zM91 142h1v5h-1zM92 137h1v6h-1zM93 137h1v4h-1zM94 135h1v6h-1zM95 137h1v4h-1zM96 137h1v6h-1zM97 137h1v6h-1zM98 136h1v5h-1zM99 137h1v4h-1zM100 140h1v6h-1zM101 140h1v6h-1zM102 140h1v5h-1zM103 140h1v4h-1zM104 139h1v5h-1zM105 140h1v5h-1zM106 137h1v4h-1zM107 137h1v4h-1zM108 137h1v4h-1zM109 137h1v4h-1zM110 137h1v5h-1zM111 140h1v5h-1zM112 143h1v6h-1zM113 144h1v5h-1zM114 144h1v5h-1zM115 144h1v7h-1zM116 144h1v7h-1zM117 144h1v7h-1zM118 140h1v6h-1zM119 137h1v4h-1zM120 137h1v4h-1zM121 137h1v6h-1zM122 135h1v6h-1zM123 137h1v5h-1zM124 137h1v5h-1zM125 137h1v4h-1zM126 139h1v4h-1zM127 140h1v4h-1zM128 140h1v4h-1zM129 140h1v4h-1zM130 140h1v4h-1zM131 139h1v5h-1zM132 140h1v4h-1zM133 137h1v4h-1zM134 137h1v4h-1zM135 137h1v4h-1zM136 137h1v5h-1zM137 138h1v5h-1zM138 140h1v5h-1zM139 144h1v5h-1zM140 143h1v6h-1zM141 143h1v6h-1zM142 144h1v7h-1zM143 144h1v7h-1zM144 143h1v6h-1zM145 137h1v7h-1zM146 135h1v6h-1zM147 137h1v6h-1zM148 136h1v5h-1zM149 137h1v5h-1zM150 135h1v6h-1zM151 137h1v4h-1zM152 137h1v4h-1zM153 140h1v6h-1zM154 140h1v6h-1zM155 140h1v5h-1zM156 140h1v5h-1zM157 140h1v6h-1zM158 140h1v4h-1zM159 138h1v4h-1zM160 137h1v4h-1zM161 137h1v4h-1zM162 136h1v5h-1zM163 136h1v5h-1zM164 139h1v5h-1zM165 142h1v6h-1zM166 144h1v5h-1zM167 144h1v7h-1zM168 142h1v7h-1zM169 144h1v5h-1zM170 144h1v5h-1zM171 141h1v6h-1zM172 137h1v5h-1zM173 135h1v6h-1zM174 137h1v4h-1zM175 137h1v4h-1zM176 137h1v4h-1zM177 137h1v4h-1zM178 137h1v6h-1zM179 138h1v5h-1zM180 140h1v6h-1zM181 140h1v4h-1zM182 140h1v4h-1zM183 140h1v4h-1zM184 140h1v5h-1zM185 140h1v6h-1zM186 137h1v4h-1zM187 137h1v4h-1zM188 137h1v4h-1zM189 137h1v4h-1zM190 138h1v4h-1zM191 140h1v4h-1zM192 143h1v8h-1zM193 144h1v5h-1zM194 144h1v6h-1zM195 142h1v7h-1zM196 142h1v7h-1zM197 144h1v6h-1zM198 139h1v6h-1zM199 137h1v4h-1zM200 137h1v4h-1zM201 137h1v5h-1zM202 137h1v4h-1zM203 137h1v4h-1zM204 137h1v4h-1zM205 137h1v5h-1zM206 139h1v6h-1zM207 140h1v6h-1zM208 140h1v6h-1zM209 140h1v6h-1zM210 140h1v4h-1zM211 140h1v4h-1zM212 139h1v4h-1zM213 137h1v4h-1zM214 137h1v4h-1zM215 137h1v4h-1zM216 136h1v5h-1zM217 138h1v4h-1zM218 141h1v4h-1zM219 144h1v5h-1zM220 144h1v5h-1zM221 144h1v5h-1zM222 144h1v7h-1zM223 144h1v5h-1zM224 143h1v6h-1zM225 137h1v7h-1zM226 137h1v4h-1zM227 137h1v5h-1zM228 137h1v5h-1zM229 137h1v4h-1zM230 137h1v4h-1zM231 137h1v6h-1zM232 137h1v6h-1zM233 140h1v6h-1zM234 140h1v4h-1zM235 140h1v4h-1zM236 140h1v6h-1zM237 140h1v4h-1zM238 140h1v4h-1zM239 138h1v4h-1zM240 137h1v5h-1zM241 137h1v4h-1zM242 137h1v6h-1zM243 135h1v6h-1zM244 139h1v4h-1zM245 142h1v5h-1zM246 144h1v5h-1zM247 144h1v5h-1zM248 144h1v6h-1zM249 144h1v5h-1zM250 144h1v5h-1zM251 141h1v6h-1zM252 137h1v6h-1zM253 137h1v5h-1zM254 137h1v6h-1zM255 137h1v4h-1zM256 137h1v6h-1zM257 137h1v5h-1zM258 137h1v6h-1zM259 138h1v4h-1zM260 140h1v5h-1zM261 140h1v4h-1zM262 140h1v4h-1zM263 140h1v4h-1zM264 140h1v5h-1zM265 140h1v4h-1zM266 137h1v4h-1zM267 137h1v4h-1zM268 137h1v4h-1zM269 135h1v6h-1zM270 138h1v5h-1zM271 140h1v6h-1zM272 142h1v7h-1zM273 144h1v5h-1zM274 144h1v7h-1zM275 144h1v5h-1zM276 144h1v5h-1zM277 144h1v5h-1zM278 139h1v6h-1zM279 137h1v4h-1zM280 137h1v4h-1zM281 137h1v4h-1zM282 136h1v5h-1zM283 137h1v4h-1zM284 137h1v6h-1zM285 137h1v5h-1zM286 139h1v4h-1zM287 140h1v4h-1zM288 140h1v4h-1zM289 140h1v4h-1zM290 140h1v4h-1zM291 140h1v5h-1zM292 139h1v4h-1zM293 137h1v4h-1zM294 137h1v4h-1zM295 137h1v4h-1zM296 137h1v4h-1zM297 139h1v4h-1zM298 142h1v4h-1zM299 144h1v5h-1zM300 144h1v5h-1zM301 144h1v5h-1zM302 144h1v5h-1zM303 144h1v7h-1zM304 143h1v4h-1zM305 137h1v7h-1zM306 137h1v4h-1zM307 137h1v6h-1zM308 137h1v6h-1zM309 137h1v5h-1zM310 136h1v5h-1zM311 137h1v6h-1zM312 136h1v5h-1zM313 140h1v4h-1zM314 140h1v4h-1zM315 140h1v4h-1zM316 140h1v6h-1zM317 140h1v4h-1zM318 140h1v4h-1zM319 138h1v6h-1zM320 137h1v4h-1zM321 137h1v4h-1zM322 137h1v6h-1zM323 137h1v4h-1zM324 140h1v5h-1zM325 143h1v5h-1zM326 144h1v5h-1zM327 144h1v5h-1zM328 144h1v7h-1zM329 144h1v6h-1zM330 144h1v5h-1zM331 141h1v5h-1zM332 137h1v6h-1zM333 137h1v5h-1zM334 137h1v4h-1zM335 135h1v6h-1zM336 137h1v4h-1zM337 137h1v5h-1zM338 135h1v6h-1zM339 138h1v5h-1zM340 140h1v4h-1zM341 140h1v4h-1zM342 139h1v5h-1zM343 140h1v4h-1zM344 140h1v4h-1zM345 140h1v4h-1zM346 136h1v5h-1zM347 137h1v6h-1zM348 135h1v6h-1zM349 137h1v4h-1zM350 138h1v5h-1zM351 141h1v6h-1zM352 144h1v6h-1zM353 144h1v5h-1zM354 144h1v5h-1zM355 144h1v7h-1zM356 144h1v7h-1zM357 144h1v5h-1zM358 139h1v6h-1zM359 137h1v4h-1zM360 136h1v5h-1zM361 136h1v5h-1zM362 137h1v4h-1zM363 137h1v5h-1zM364 136h1v5h-1zM365 137h1v4h-1zM366 140h1v4h-1zM367 140h1v4h-1zM368 139h1v5h-1zM369 140h1v4h-1zM370 139h1v5h-1zM371 140h1v4h-1zM372 139h1v4h-1zM373 137h1v5h-1zM374 137h1v4h-1zM375 137h1v4h-1zM376 137h1v6h-1zM377 139h1v6h-1zM378 143h1v5h-1zM379 144h1v7h-1zM380 143h1v6h-1zM381 144h1v7h-1zM382 143h1v6h-1zM383 145h1v6h-1zM384 143h1v6h-1zM385 141h1v5h-1zM386 139h1v4h-1zM387 137h1v5h-1zM388 135h1v50h-1zM389 184h1v49h-1zM390 233h1v2h-1zM391 235h1v4h-1zM392 233h1v5h-1zM393 235h1v6h-1zM394 235h1v4h-1zM395 235h1v4h-1zM396 235h1v4h-1zM397 233h1v8h-1zM398 213h1v26h-1zM399 151h1v63h-1zM400 151h1v4h-1zM401 148h1v5h-1zM402 148h1v4h-1zM403 148h1v4h-1zM404 148h1v5h-1zM405 148h1v4h-1zM406 148h1v4h-1zM407 146h1v4h-1zM408 146h1v5h-1zM409 146h1v4h-1zM410 143h1v5h-1zM411 141h1v4h-1zM412 139h1v5h-1zM413 139h1v5h-1zM414 138h1v5h-1zM415 139h1v6h-1zM416 138h1v5h-1zM417 139h1v4h-1zM418 139h1v6h-1zM419 141h1v6h-1zM420 141h1v5h-1zM421 142h1v4h-1zM422 142h1v4h-1zM423 142h1v4h-1zM424 142h1v5h-1zM425 142h1v6h-1zM426 139h1v5h-1zM427 139h1v4h-1zM428 139h1v6h-1zM429 139h1v5h-1zM430 140h1v6h-1zM431 143h1v5h-1zM432 146h1v4h-1zM433 146h1v4h-1zM434 146h1v6h-1zM435 146h1v4h-1zM436 146h1v5h-1zM437 146h1v5h-1zM438 138h1v9h-1zM439 139h1v5h-1zM440 139h1v4h-1zM441 139h1v4h-1zM442 139h1v6h-1zM443 139h1v4h-1zM444 137h1v6h-1zM445 139h1v6h-1zM446 141h1v5h-1zM447 142h1v5h-1zM448 140h1v6h-1zM449 140h1v6h-1zM450 142h1v5h-1zM451 142h1v6h-1zM452 141h1v4h-1zM453 139h1v4h-1zM454 139h1v4h-1zM455 139h1v4h-1zM456 139h1v4h-1zM457 141h1v4h-1zM458 144h1v6h-1zM459 146h1v5h-1zM460 146h1v4h-1zM461 146h1v6h-1zM462 146h1v4h-1zM463 145h1v4h-1zM464 141h1v7h-1zM465 142h1v4h-1zM466 140h1v4h-1zM467 139h1v4h-1zM468 137h1v24h-1zM469 160h1v73h-1zM470 233h1v4h-1zM471 235h1v4h-1zM472 233h1v6h-1zM473 235h1v3h-1zM474 235h1v4h-1zM475 235h1v4h-1zM476 235h1v4h-1zM477 235h1v7h-1zM478 231h1v9h-1zM479 151h1v81h-1zM480 151h1v6h-1zM481 146h1v6h-1zM482 148h1v6h-1zM483 148h1v5h-1zM484 147h1v5h-1zM485 148h1v4h-1zM486 148h1v4h-1zM487 146h1v4h-1zM488 146h1v4h-1zM489 146h1v4h-1zM490 143h1v5h-1zM491 139h1v6h-1zM492 139h1v4h-1zM493 139h1v4h-1zM494 139h1v4h-1zM495 139h1v4h-1zM496 139h1v4h-1zM497 138h1v5h-1zM498 139h1v4h-1zM499 141h1v6h-1zM500 141h1v5h-1zM501 142h1v6h-1zM502 142h1v4h-1zM503 142h1v6h-1zM504 142h1v4h-1zM505 142h1v4h-1zM506 137h1v6h-1zM507 137h1v5h-1zM508 137h1v4h-1zM509 137h1v4h-1zM510 138h1v4h-1zM511 141h1v4h-1zM512 144h1v5h-1zM513 143h1v6h-1zM514 144h1v7h-1zM515 144h1v7h-1zM516 144h1v5h-1zM517 143h1v6h-1zM518 138h1v6h-1zM519 135h1v6h-1zM520 136h1v5h-1zM521 137h1v6h-1zM522 137h1v4h-1zM523 137h1v4h-1zM524 137h1v4h-1zM525 137h1v5h-1zM526 140h1v4h-1zM527 140h1v4h-1zM528 140h1v4h-1zM529 140h1v6h-1zM530 140h1v4h-1zM531 140h1v6h-1zM532 138h1v4h-1zM533 137h1v4h-1zM534 135h1v6h-1zM535 137h1v4h-1zM536 137h1v4h-1zM537 139h1v4h-1zM538 142h1v5h-1zM539 144h1v7h-1zM540 144h1v7h-1zM541 144h1v5h-1zM542 144h1v7h-1zM543 144h1v5h-1zM544 141h1v6h-1zM545 137h1v5h-1zM546 137h1v4h-1zM547 137h1v6h-1zM548 137h1v4h-1zM549 137h1v4h-1zM550 137h1v4h-1zM551 137h1v4h-1zM552 138h1v6h-1zM553 140h1v4h-1zM554 140h1v4h-1zM555 138h1v6h-1zM556 138h1v6h-1zM557 140h1v4h-1zM558 140h1v4h-1zM559 137h1v5h-1zM560 137h1v6h-1zM561 137h1v5h-1zM562 137h1v5h-1zM563 138h1v4h-1zM564 138h1v6h-1zM565 143h1v6h-1zM566 144h1v5h-1zM567 144h1v7h-1zM568 144h1v5h-1zM569 144h1v5h-1zM570 144h1v5h-1zM571 139h1v6h-1zM572 137h1v5h-1zM573 137h1v5h-1zM574 137h1v4h-1zM575 137h1v4h-1zM576 137h1v5h-1zM577 137h1v5h-1zM578 137h1v5h-1zM579 137h1v6h-1zM580 139h1v5h-1zM581 140h1v4h-1zM582 140h1v5h-1zM583 140h1v4h-1zM584 140h1v6h-1zM585 139h1v6h-1zM586 137h1v4h-1zM587 137h1v6h-1zM588 137h1v5h-1zM589 137h1v4h-1zM590 139h1v4h-1zM591 141h1v4h-1zM592 144h1v5h-1zM593 144h1v5h-1zM594 144h1v5h-1zM595 144h1v5h-1zM596 144h1v5h-1zM597 141h1v6h-1zM598 137h1v5h-1zM599 137h1v4h-1zM600 137h1v4h-1zM601 137h1v4h-1zM602 137h1v5h-1zM603 135h1v6h-1zM604 137h1v4h-1zM605 137h1v6h-1zM606 140h1v4h-1zM607 140h1v5h-1zM608 140h1v5h-1zM609 140h1v4h-1zM610 140h1v4h-1zM611 140h1v6h-1zM612 138h1v4h-1zM613 137h1v5h-1zM614 137h1v4h-1zM615 137h1v5h-1zM616 137h1v6h-1zM617 140h1v6h-1zM618 143h1v6h-1zM619 144h1v5h-1zM620 144h1v5h-1zM621 144h1v7h-1zM622 144h1v5h-1zM623 144h1v5h-1zM624 141h1v5h-1zM625 137h1v6h-1zM626 137h1v6h-1zM627 136h1v5h-1zM628 137h1v5h-1zM629 136h1v5h-1zM630 137h1v6h-1zM631 137h1v6h-1zM632 138h1v4h-1zM633 140h1v4h-1zM634 140h1v4h-1zM635 140h1v5h-1zM636 140h1v5h-1zM637 140h1v4h-1zM638 140h1v5h-1zM639 137h1v5h-1zM640 136h1v5h-1zM641 137h1v5h-1zM642 137h1v4h-1zM643 138h1v6h-1zM644 141h1v4h-1zM645 144h1v5h-1zM646 144h1v5h-1zM647 144h1v7h-1zM648 144h1v6h-1zM649 144h1v7h-1zM650 144h1v6h-1zM651 139h1v6h-1zM652 137h1v4h-1zM653 137h1v4h-1zM654 137h1v4h-1zM655 135h1v6h-1zM656 135h1v6h-1zM657 137h1v4h-1zM658 137h1v4h-1zM659 140h1v4h-1zM660 140h1v4h-1zM661 138h1v6h-1zM662 140h1v5h-1zM663 140h1v4h-1zM664 140h1v4h-1zM665 139h1v4h-1zM666 137h1v4h-1zM667 137h1v6h-1zM668 136h1v5h-1zM669 137h1v6h-1zM670 139h1v4h-1zM671 142h1v4h-1zM672 144h1v5h-1zM673 144h1v5h-1zM674 144h1v5h-1zM675 144h1v5h-1zM676 144h1v5h-1zM677 142h1v4h-1zM678 135h1v8h-1zM679 137h1v4h-1zM680 137h1v6h-1zM681 137h1v4h-1zM682 137h1v4h-1zM683 137h1v5h-1zM684 137h1v6h-1zM685 137h1v6h-1zM686 140h1v4h-1zM687 140h1v4h-1zM688 140h1v6h-1zM689 139h1v5h-1zM690 140h1v4h-1zM691 140h1v4h-1zM692 138h1v5h-1zM693 137h1v6h-1zM694 137h1v4h-1zM695 135h1v6h-1zM696 137h1v5h-1zM697 140h1v4h-1zM698 143h1v5h-1zM699 144h1v5h-1zM700 144h1v5h-1zM701 144h1v5h-1zM702 144h1v7h-1zM703 144h1v7h-1zM704 140h1v5h-1zM705 137h1v4h-1zM706 137h1v5h-1zM707 135h1v6h-1zM708 137h1v4h-1zM709 137h1v4h-1zM710 137h1v5h-1zM711 137h1v6h-1zM712 138h1v4h-1zM713 140h1v4h-1zM714 140h1v6h-1zM715 138h1v6h-1zM716 140h1v5h-1zM717 140h1v5h-1zM718 140h1v4h-1zM719 137h1v6h-1zM720 137h1v4h-1zM721 137h1v4h-1zM722 137h1v4h-1zM723 138h1v6h-1zM724 141h1v4h-1zM725 144h1v6h-1zM726 144h1v5h-1zM727 144h1v7h-1zM728 144h1v7h-1zM729 144h1v5h-1zM730 144h1v6h-1zM731 138h1v7h-1zM732 137h1v4h-1zM733 137h1v6h-1zM734 137h1v6h-1zM735 137h1v5h-1zM736 137h1v4h-1zM737 137h1v4h-1zM738 137h1v6h-1zM739 140h1v5h-1zM740 140h1v6h-1zM741 140h1v4h-1zM742 140h1v6h-1zM743 139h1v5h-1zM744 139h1v5h-1zM745 139h1v5h-1zM746 137h1v4h-1zM747 137h1v4h-1zM748 137h1v4h-1zM749 137h1v4h-1zM750 139h1v4h-1zM751 142h1v5h-1zM752 144h1v7h-1zM753 144h1v5h-1zM754 144h1v5h-1zM755 142h1v7h-1zM756 146h1v4h-1zM757 144h1v6h-1zM758 142h1v5h-1zM759 141h1v5h-1zM760 139h1v6h-1zM761 135h1v6h-1zM762 135h1v5h-1zM763 133h1v5h-1zM764 132h1v4h-1zM765 133h1v6h-1zM766 134h1v4h-1zM767 136h1v6h-1zM768 138h1v5h-1zM769 138h1v4h-1zM770 138h1v4h-1zM771 138h1v5h-1zM772 136h1v6h-1zM773 135h1v4h-1zM774 134h1v5h-1zM775 134h1v4h-1zM776 134h1v6h-1zM777 134h1v5h-1zM778 136h1v4h-1zM779 136h1v6h-1zM780 139h1v5h-1zM781 141h1v4h-1zM782 142h1v4h-1z"/>
<path fill="#ffff00" d="M770.8 212.8L784 204.8V220.4z"/>
<path fill="#ffff00" d="M0 232.5H8L15.5 238.5L8 245.5H0z"/>
<text x="-0.2" y="244.6" font-size="14.5" font-weight="bold" fill="#404050">1</text>
<path fill="#4068f8" stroke="#78b0ff" stroke-width="1" d="M364.5 28.5H433.5V41.5L430.5 44.5H405L399.5 51.5L394 44.5H367.5L364.5 41.5z"/>
<path stroke="#a8d4ff" stroke-width="1" d="M364 28.5H434"/>
<text x="399.7" y="43" font-size="16" fill="#fff" text-anchor="middle">0.000s</text>
<text x="24.2" y="21.9" style="font-family:'DejaVu Sans',sans-serif" font-size="19.4" fill="#ffff00" stroke="#ffff00" stroke-width="0.95" textLength="78.6" lengthAdjust="spacingAndGlyphs">Hantek</text>
<rect x="145.5" y="3.5" width="22" height="20" fill="#000" stroke="#a8a8a8"/>
<rect x="170.5" y="3.5" width="22" height="20" fill="#000" stroke="#a8a8a8"/>
<rect x="195.5" y="3.5" width="22" height="20" fill="#000" stroke="#a8a8a8"/>
<path fill="none" stroke="#ffff00" stroke-width="2.6" stroke-linecap="round" d="M146.8 7.7L147.1 7.2L147.5 6.8L147.8 6.4L148.1 6.1L148.5 6.0L148.8 5.9L149.1 6.0L149.5 6.1L149.8 6.4L150.1 6.8L150.5 7.2L150.8 7.8L151.1 8.3L151.5 8.9L151.8 9.5L152.1 10.0L152.5 10.5L152.8 10.9L153.1 11.2L153.5 11.4L153.8 11.5L154.1 11.5L154.5 11.3L154.8 11.1L155.1 10.8L155.5 10.3L155.8 9.8L156.1 9.3L156.5 8.7L156.8 8.2L157.1 7.6L157.5 7.1L157.8 6.7L158.1 6.3L158.5 6.1L158.8 5.9L159.1 5.9L159.5 6.0L159.8 6.2L160.1 6.5L160.5 6.9L160.8 7.4L161.1 7.9L161.5 8.4L161.8 9.0L162.1 9.6L162.5 10.1L162.8 10.6L163.1 10.9L163.5 11.2L163.8 11.4L164.1 11.5L164.5 11.5L164.8 11.3L165.1 11.0L165.5 10.7L165.8 10.2L166.1 9.7L166.5 9.2L166.8 8.6"/>
<path fill="none" stroke="#00ffff" stroke-width="2.6" stroke-linecap="round" d="M146.8 16.8L147.1 16.3L147.5 15.9L147.8 15.5L148.1 15.2L148.5 15.1L148.8 15.0L149.1 15.1L149.5 15.2L149.8 15.5L150.1 15.9L150.5 16.3L150.8 16.9L151.1 17.4L151.5 18.0L151.8 18.6L152.1 19.1L152.5 19.6L152.8 20.0L153.1 20.3L153.5 20.5L153.8 20.6L154.1 20.6L154.5 20.4L154.8 20.2L155.1 19.9L155.5 19.4L155.8 18.9L156.1 18.4L156.5 17.8L156.8 17.3L157.1 16.7L157.5 16.2L157.8 15.8L158.1 15.4L158.5 15.2L158.8 15.0L159.1 15.0L159.5 15.1L159.8 15.3L160.1 15.6L160.5 16.0L160.8 16.5L161.1 17.0L161.5 17.5L161.8 18.1L162.1 18.7L162.5 19.2L162.8 19.7L163.1 20.0L163.5 20.3L163.8 20.5L164.1 20.6L164.5 20.6L164.8 20.4L165.1 20.1L165.5 19.8L165.8 19.3L166.1 18.8L166.5 18.3L166.8 17.7"/>
<path fill="none" stroke="#00ff00" stroke-width="2.7" stroke-linecap="round" d="M174.8 20L188.4 6"/>
<defs><filter id="bl" x="-20%" y="-20%" width="140%" height="140%"><feGaussianBlur stdDeviation="0.6"/></filter></defs>
<g filter="url(#bl)"><path fill="#909090" opacity="0.85" d="M197.8 14L202.3 13L203 6.5L206 4.8L212 5.6L214.3 9L214.8 14.5L212.6 15.6L210.6 13.5L210.2 20.8L206 22.4L199.4 22L197.4 18z"/><path fill="none" stroke="#e0e0e0" stroke-width="0.9" opacity="0.7" d="M200.5 15v6M203.5 14.5v6.5M206.5 7v14M209.3 6v8M212.3 8v5"/><path fill="none" stroke="#181818" stroke-width="0.9" opacity="0.6" d="M202 15.5v5M205 9v10M208 8v6M210.8 8v4"/></g>
<path fill="none" stroke="#302830" stroke-width="1.2" d="M263 2.6H223.4Q220.6 2.6 220.6 5.4V20.4Q220.6 22.2 223.4 23.8"/>
<path fill="none" stroke="#c8ffff" stroke-width="2" stroke-linejoin="miter" d="M276.3 21.5V6H285.2V23"/>
<path fill="none" stroke="#c8ffff" stroke-width="1.6" d="M271 22L276 20.3M285.5 22.3L292 20.8"/>
<path fill="none" stroke="#c8ffff" stroke-width="1" d="M277.5 3v6M279.5 3v6M281.5 3v6M283.5 3v6M273.5 17v7M271.5 20.5v3M287.5 18v6M289.5 18v5.5M291.5 18v4"/>
<text x="298.4" y="21.7" font-size="24.4" font-weight="bold" fill="#00ff00" textLength="13.4" lengthAdjust="spacingAndGlyphs">T</text>
<g fill="none" stroke="#3c403c"><ellipse cx="339.3" cy="14.8" rx="1.7" ry="4.5" stroke-width="2.6"/><path stroke-width="3.6" d="M322.3 14H337"/><path fill="#3c403c" stroke="none" d="M319.8 14L322.6 12.2V15.8z"/><path stroke-width="2" d="M324 15v3.7M328.1 15v4.4M332.2 15v3.7"/><path stroke-width="1.2" d="M323 16.6H333.2"/></g>
<g fill="none"><path stroke="#ccd8f4" stroke-width="1.3" d="M345.8 3.4H365.5V22.4H348L345.8 20.2z"/><path stroke="#5050b0" stroke-width="0.9" opacity="0.85" d="M347.4 4.5V19.5M364.3 4.5V21.5"/><path stroke="#e0e4ff" stroke-width="1.5" d="M349.7 3.5V20.6M362.6 3.5V21M349.7 12.4H362.6"/><path stroke="#2020a0" stroke-width="1.2" d="M351.3 4V11.2"/><rect x="351.2" y="15.2" width="10" height="7.2" fill="#c8f4f8"/><rect x="352.6" y="16.6" width="2.4" height="5" fill="#2020a0"/></g>
<g fill="none" stroke="#3c403c"><rect x="376" y="3.9" width="11" height="9.4" fill="#5c605c" stroke-width="1.9"/><path stroke-width="1" d="M378.3 6.4h6.6M378.3 11.3h6.6"/><path stroke-width="1.6" d="M378.3 8.9h6.6"/><rect x="372.1" y="14" width="18.7" height="8.9" rx="1.6" stroke-width="1.9"/><rect x="374" y="17" width="15" height="3.2" fill="#3c403c" stroke="none"/></g>
<rect x="396" y="1" width="1" height="26" fill="#000"/><rect x="397" y="1" width="1" height="26" fill="#787c78"/>
<path fill="none" stroke="#5850b0" stroke-width="1" d="M405 3.5H403.5V24.5H516.5V3.5H515"/>
<rect x="405" y="3" width="109" height="21" fill="#ff6000"/>
<rect x="407.3" y="5.8" width="104.5" height="16" fill="#000"/>
<path fill="none" stroke="#00ffff" stroke-width="2.5" stroke-linejoin="round" d="M407.80 13.15L408.05 13.53L408.30 14.18L408.55 15.07L408.80 16.15L409.05 17.35L409.30 18.59L409.55 19.67L409.80 20.07L410.05 20.20L410.30 20.07L410.55 19.67L410.80 19.02L411.05 18.15L411.30 17.10L411.55 15.91L411.80 14.63L412.05 13.30L412.30 12.00L412.55 10.76L412.80 9.65L413.05 8.70L413.30 7.96L413.55 7.46L413.80 7.22L414.05 7.25L414.30 7.54L414.55 8.09L414.80 8.88L415.05 9.86L415.30 11.00L415.55 12.25L415.80 13.57L416.05 14.89L416.30 16.16L416.55 17.32L416.80 18.34L417.05 19.17L417.30 19.77L417.55 20.11L417.80 20.19L418.05 20.01L418.30 19.56L418.55 18.86L418.80 17.96L419.05 16.87L419.30 15.66L419.55 14.36L419.80 13.04L420.05 11.74L420.30 10.53L420.55 9.44L420.80 8.54L421.05 7.84L421.30 7.39L421.55 7.21L421.80 7.29L422.05 7.63L422.30 8.23L422.55 9.06L422.80 10.08L423.05 11.24L423.30 12.51L423.55 13.83L423.80 15.15L424.05 16.40L424.30 17.54L424.55 18.52L424.80 19.31L425.05 19.86L425.30 20.15L425.55 20.18L425.80 19.94L426.05 19.44L426.30 18.70L426.55 17.75L426.80 16.64L427.05 15.40L427.30 14.10L427.55 12.77L427.80 11.49L428.05 10.30L428.30 9.25L428.55 8.38L428.80 7.73L429.05 7.33L429.30 7.20L429.55 7.33L429.80 7.73L430.05 8.38L430.30 9.25L430.55 10.30L430.80 11.49L431.05 12.77L431.30 14.10L431.55 15.40L431.80 16.64L432.05 17.75L432.30 18.70L432.55 19.44L432.80 19.94L433.05 20.18L433.30 20.15L433.55 19.86L433.80 19.31L434.05 18.52L434.30 17.54L434.55 16.40L434.80 15.15L435.05 13.83L435.30 12.51L435.55 11.24L435.80 10.08L436.05 9.06L436.30 8.23L436.55 7.63L436.80 7.29L437.05 7.21L437.30 7.39L437.55 7.84L437.80 8.54L438.05 9.44L438.30 10.53L438.55 11.74L438.80 13.04L439.05 14.36L439.30 15.66L439.55 16.87L439.80 17.96L440.05 18.86L440.30 19.56L440.55 20.01L440.80 20.19L441.05 20.11L441.30 19.77L441.55 19.17L441.80 18.34L442.05 17.32L442.30 16.16L442.55 14.89L442.80 13.57L443.05 12.25L443.30 11.00L443.55 9.86L443.80 8.88L444.05 8.09L444.30 7.54L444.55 7.25L444.80 7.22L445.05 7.46L445.30 7.96L445.55 8.70L445.80 9.65L446.05 10.76L446.30 12.00L446.55 13.30L446.80 14.63L447.05 15.91L447.30 17.10L447.55 18.15L447.80 19.02L448.05 19.67L448.30 20.07L448.55 20.20L448.80 20.07L449.05 19.67L449.30 19.02L449.55 18.15L449.80 17.10L450.05 15.91L450.30 14.63L450.55 13.30L450.80 12.00L451.05 10.76L451.30 9.65L451.55 8.70L451.80 7.96L452.05 7.46L452.30 7.22L452.55 7.25L452.80 7.54L453.05 8.09L453.30 8.88L453.55 9.86L453.80 11.00L454.05 12.25L454.30 13.57L454.55 14.89L454.80 16.16L455.05 17.32L455.30 18.34L455.55 19.17L455.80 19.77L456.05 20.11L456.30 20.19L456.55 20.01L456.80 19.56L457.05 18.86L457.30 17.96L457.55 16.87L457.80 15.66L458.05 14.36L458.30 13.04L458.55 11.74L458.80 10.53L459.05 9.44L459.30 8.54L459.55 7.84L459.80 7.39L460.05 7.21L460.30 7.29L460.55 7.63L460.80 8.23L461.05 9.06L461.30 10.08L461.55 11.24L461.80 12.51L462.05 13.83L462.30 15.15L462.55 16.40L462.80 17.54L463.05 18.52L463.30 19.31L463.55 19.86L463.80 20.15L464.05 20.18L464.30 19.94L464.55 19.44L464.80 18.70L465.05 17.75L465.30 16.64L465.55 15.40L465.80 14.10L466.05 12.77L466.30 11.49L466.55 10.30L466.80 9.25L467.05 8.38L467.30 7.73L467.55 7.33L467.80 7.20L468.05 7.33L468.30 7.73L468.55 8.38L468.80 9.25L469.05 10.30L469.30 11.49L469.55 12.77L469.80 14.10L470.05 15.40L470.30 16.64L470.55 17.75L470.80 18.70L471.05 19.44L471.30 19.94L471.55 20.18L471.80 20.15L472.05 19.86L472.30 19.31L472.55 18.52L472.80 17.54L473.05 16.40L473.30 15.15L473.55 13.83L473.80 12.51L474.05 11.24L474.30 10.08L474.55 9.06L474.80 8.23L475.05 7.63L475.30 7.29L475.55 7.21L475.80 7.39L476.05 7.84L476.30 8.54L476.55 9.44L476.80 10.53L477.05 11.74L477.30 13.04L477.55 14.36L477.80 15.66L478.05 16.87L478.30 17.96L478.55 18.86L478.80 19.56L479.05 20.01L479.30 20.19L479.55 20.11L479.80 19.77L480.05 19.17L480.30 18.34L480.55 17.32L480.80 16.16L481.05 14.89L481.30 13.57L481.55 12.25L481.80 11.00L482.05 9.86L482.30 8.88L482.55 8.09L482.80 7.54L483.05 7.25L483.30 7.22L483.55 7.46L483.80 7.96L484.05 8.70L484.30 9.65L484.55 10.76L484.80 12.00L485.05 13.30L485.30 14.63L485.55 15.91L485.80 17.10L486.05 18.15L486.30 19.02L486.55 19.67L486.80 20.07L487.05 20.20L487.30 20.07L487.55 19.67L487.80 19.02L488.05 18.15L488.30 17.10L488.55 15.91L488.80 14.63L489.05 13.30L489.30 12.00L489.55 10.76L489.80 9.65L490.05 8.70L490.30 7.96L490.55 7.46L490.80 7.22L491.05 7.25L491.30 7.54L491.55 8.09L491.80 8.88L492.05 9.86L492.30 11.00L492.55 12.25L492.80 13.57L493.05 14.89L493.30 16.16L493.55 17.32L493.80 18.34L494.05 19.17L494.30 19.77L494.55 20.11L494.80 20.19L495.05 20.01L495.30 19.56L495.55 18.86L495.80 17.96L496.05 16.87L496.30 15.66L496.55 14.36L496.80 13.04L497.05 11.74L497.30 10.53L497.55 9.44L497.80 8.54L498.05 7.84L498.30 7.39L498.55 7.21L498.80 7.29L499.05 7.63L499.30 8.23L499.55 9.06L499.80 10.08L500.05 11.24L500.30 12.51L500.55 13.83L500.80 15.15L501.05 16.40L501.30 17.54L501.55 18.52L501.80 19.31L502.05 19.86L502.30 20.15L502.55 20.18L502.80 19.94L503.05 19.44L503.30 18.70L503.55 17.75L503.80 16.64L504.05 15.40L504.30 14.10L504.55 12.77L504.80 11.49L505.05 10.30L505.30 9.25L505.55 8.38L505.80 7.73L506.05 7.33L506.30 7.20L506.55 7.33L506.80 7.73L507.05 8.38L507.30 9.25L507.55 10.30L507.80 11.49L508.05 12.77L508.30 14.10L508.55 15.40L508.80 16.64L509.05 17.75L509.30 18.70L509.55 19.44L509.80 19.94L510.05 20.18L510.30 20.15L510.55 19.86L510.80 19.31L511.05 18.52L511.30 17.54L511.55 16.40"/>
<rect x="521.5" y="3.5" width="21" height="21" fill="#000" stroke="#a8a8a8"/>
<text x="531.6" y="20.6" font-size="19.5" font-weight="bold" fill="#c8ffff" text-anchor="middle" textLength="17.4" lengthAdjust="spacingAndGlyphs">W</text>
<rect x="547.5" y="3.1" width="98.5" height="21.3" rx="6.5" fill="#000"/>
<text x="572.9" y="20" font-size="16.4" fill="#fff" textLength="47.2" lengthAdjust="spacingAndGlyphs">2.00us</text>
<text x="707.6" y="20" font-size="16.2" fill="#c0ffff" textLength="41.2" lengthAdjust="spacingAndGlyphs">Меню</text>
<rect x="16" y="457" width="17" height="2" fill="#ffff00"/>
<path stroke="#ffff00" stroke-width="1" stroke-dasharray="3 1.5" d="M16 461.5H33"/>
<text x="16.5" y="472.8" font-size="11.5" fill="#e8e840" textLength="16" lengthAdjust="spacingAndGlyphs">DC</text>
<circle cx="49" cy="464.7" r="8.9" fill="none" stroke="#3c403c" stroke-width="1.9"/>
<text x="49" y="469.6" font-size="16" font-weight="bold" fill="#3c403c" text-anchor="middle" textLength="15" lengthAdjust="spacingAndGlyphs">20</text>
<path fill="none" stroke="#ffff00" stroke-width="1.8" d="M64.5 461.5H67.5V458.5H71.5V461.5H74.5V458.5H78.5V461.5H81.5"/>
<path fill="none" stroke="#6868c8" stroke-width="1.7" d="M64.5 467.5H67.5V470.5H71.5V467.5H74.5V470.5H78.5V467.5H81.5"/>
<rect x="87.5" y="453" width="81.5" height="22" rx="11" fill="#000"/>
<text x="128.6" y="471" font-size="16.8" fill="#ffff00" text-anchor="middle">2.00V</text>
<rect x="171" y="452" width="1" height="26" fill="#000"/><rect x="172" y="452" width="1" height="26" fill="#787c78"/>
<rect x="331" y="452" width="1" height="26" fill="#000"/><rect x="332" y="452" width="1" height="26" fill="#787c78"/>
<rect x="501" y="452" width="1" height="26" fill="#000"/><rect x="502" y="452" width="1" height="26" fill="#787c78"/>
<text x="351.5" y="470" font-size="16.8" textLength="29.6" lengthAdjust="spacingAndGlyphs" fill="#ffff00">CH1</text>
<path fill="none" stroke="#80c0ff" stroke-width="2" d="M385 472H391L396 457H402.5"/>
<rect x="405" y="453" width="78.5" height="22" rx="11" fill="#000"/>
<text x="445" y="470" font-size="16.8" fill="#ffff00" text-anchor="middle">1.04V</text>
<rect x="513.5" y="453" width="129.5" height="22" rx="11" fill="#000"/>
<text x="540" y="470" font-size="16.8" textLength="77.5" lengthAdjust="spacingAndGlyphs" fill="#ffff00">334.000Hz</text>
<text x="660" y="470" font-size="16.3" fill="#fff">30-June-23 21:37</text>
</svg></body></html>
